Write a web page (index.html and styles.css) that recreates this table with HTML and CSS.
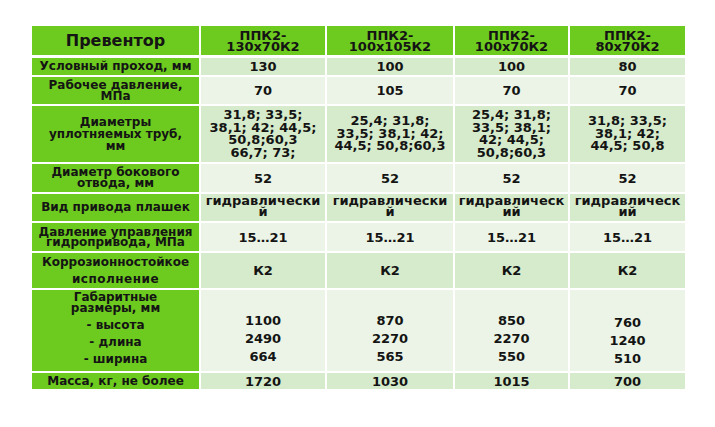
FILE: index.html
```html
<!DOCTYPE html>
<html lang="ru">
<head>
<meta charset="utf-8">
<title>Превентор</title>
<link rel="stylesheet" href="styles.css">
</head>
<body>
<div class="spec">
  <div class="c g head big">Превентор</div>
  <div class="c g head val">ППК2-<br>130х70К2</div>
  <div class="c g head val">ППК2-<br>100х105К2</div>
  <div class="c g head val">ППК2-<br>100х70К2</div>
  <div class="c g head val">ППК2-<br>80х70К2</div>

  <div class="c g">Условный проход, мм</div>
  <div class="c d val">130</div>
  <div class="c d val">100</div>
  <div class="c d val">100</div>
  <div class="c d val">80</div>

  <div class="c g">Рабочее давление,<br>МПа</div>
  <div class="c l val">70</div>
  <div class="c l val">105</div>
  <div class="c l val">70</div>
  <div class="c l val">70</div>

  <div class="c g lh12">Диаметры<br>уплотняемых труб,<br>мм</div>
  <div class="c d val pipes">31,8; 33,5;<br>38,1; 42; 44,5;<br>50,8;60,3<br>66,7; 73;</div>
  <div class="c d val pipes">25,4; 31,8;<br>33,5; 38,1; 42;<br>44,5; 50,8;60,3</div>
  <div class="c d val pipes">25,4; 31,8;<br>33,5; 38,1;<br>42; 44,5;<br>50,8;60,3</div>
  <div class="c d val pipes">31,8; 33,5;<br>38,1; 42;<br>44,5; 50,8</div>

  <div class="c g">Диаметр бокового<br>отвода, мм</div>
  <div class="c l val">52</div>
  <div class="c l val">52</div>
  <div class="c l val">52</div>
  <div class="c l val">52</div>

  <div class="c g">Вид привода плашек</div>
  <div class="c d val raise">гидравлически<br>й</div>
  <div class="c d val raise">гидравлически<br>й</div>
  <div class="c d val raise">гидравлическ<br>ий</div>
  <div class="c d val raise">гидравлическ<br>ий</div>

  <div class="c g lh10">Давление управления<br>гидропривода, МПа</div>
  <div class="c l val">15…21</div>
  <div class="c l val">15…21</div>
  <div class="c l val">15…21</div>
  <div class="c l val">15…21</div>

  <div class="c g lh17">Коррозионностойкое<br><span class="wide">исполнение</span></div>
  <div class="c d val">К2</div>
  <div class="c d val">К2</div>
  <div class="c d val">К2</div>
  <div class="c d val">К2</div>

  <div class="c g top">
    <div class="dim-title">Габаритные<br>размеры, мм</div>
    <div class="dim-list">- высота<br>- длина<br>- ширина</div>
  </div>
  <div class="c l val top vals">1100<br>2490<br>664</div>
  <div class="c l val top vals">870<br>2270<br>565</div>
  <div class="c l val top vals">850<br>2270<br>550</div>
  <div class="c l val top vals last">760<br>1240<br>510</div>

  <div class="c g">Масса, кг, не более</div>
  <div class="c d val">1720</div>
  <div class="c d val">1030</div>
  <div class="c d val">1015</div>
  <div class="c d val">700</div>
</div>
</body>
</html>
```

FILE: styles.css
```css
html, body {
  background: #ffffff;
}

body {
  margin: 0;
  padding: 26px 0 0 32px;
  font-family: "DejaVu Sans", "Noto Sans", sans-serif;
  font-weight: bold;
  font-size: 12px;
  color: #141414;
}

.spec {
  display: grid;
  grid-template-columns: 167px 124px 126px 113px 115px;
  grid-template-rows: 30px 17px 27px 56px 28px 27px 28px 35px 81px 16px;
  column-gap: 2px;
  row-gap: 2px;
  width: 653px;
}

.c {
  display: flex;
  flex-direction: column;
  justify-content: center;
  align-items: center;
  text-align: center;
  line-height: 11px;
  white-space: nowrap;
}

.val {
  font-size: 13px;
}

.g {
  background: #6dca1f;
}

.d {
  background: #d6ebcb;
}

.l {
  background: #ebf4e6;
}

.head {
  margin-bottom: 1px;
}

.big {
  font-size: 16px;
  line-height: 18px;
}

.lh12 {
  line-height: 12px;
}

.pipes {
  line-height: 12.5px;
}

.raise {
  padding-bottom: 3px;
}

.lh10 {
  line-height: 10px;
}

.lh17 {
  line-height: 17px;
}

.wide {
  letter-spacing: 0.5px;
}

.top {
  justify-content: flex-start;
}

.dim-title {
  padding-top: 2px;
  line-height: 11px;
}

.dim-list {
  margin-top: 3px;
  line-height: 17px;
}

.vals {
  padding-top: 22px;
  line-height: 18px;
}

.vals.last {
  padding-top: 24px;
}
```
